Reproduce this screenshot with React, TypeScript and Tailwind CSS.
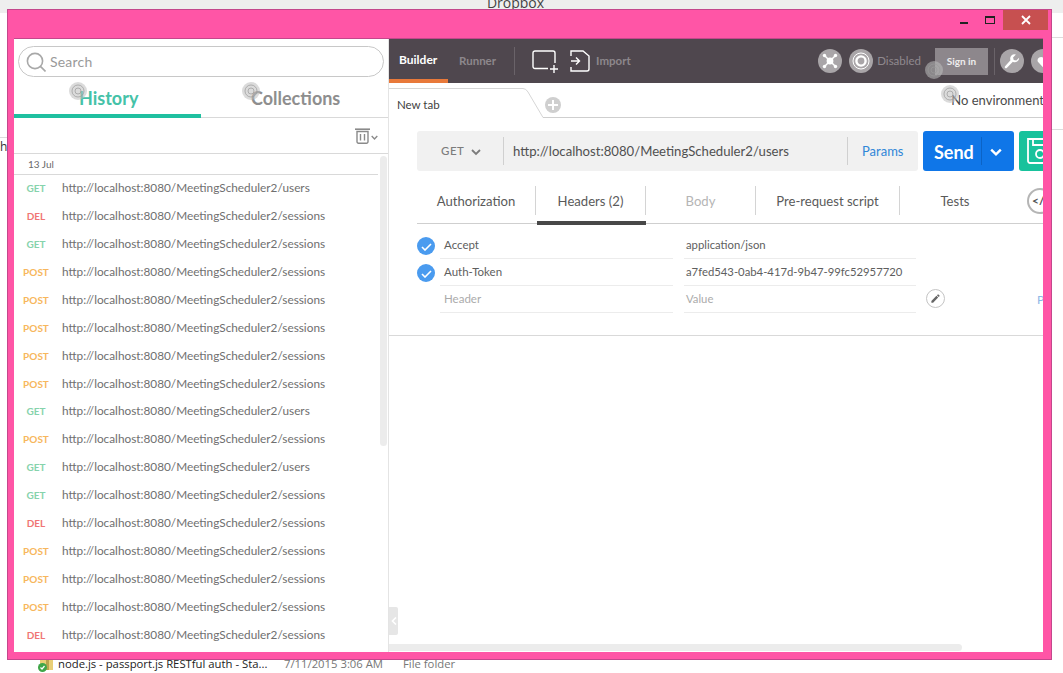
import React from 'react';

const USERS = 'http://localhost:8080/MeetingScheduler2/users';
const SESSIONS = 'http://localhost:8080/MeetingScheduler2/sessions';

const history: { method: 'GET' | 'POST' | 'DEL'; url: string }[] = [
  { method: 'GET', url: USERS },
  { method: 'DEL', url: SESSIONS },
  { method: 'GET', url: SESSIONS },
  { method: 'POST', url: SESSIONS },
  { method: 'POST', url: SESSIONS },
  { method: 'POST', url: SESSIONS },
  { method: 'POST', url: SESSIONS },
  { method: 'POST', url: SESSIONS },
  { method: 'GET', url: USERS },
  { method: 'POST', url: SESSIONS },
  { method: 'GET', url: USERS },
  { method: 'GET', url: SESSIONS },
  { method: 'DEL', url: SESSIONS },
  { method: 'POST', url: SESSIONS },
  { method: 'POST', url: SESSIONS },
  { method: 'POST', url: SESSIONS },
  { method: 'DEL', url: SESSIONS },
];

const methodColor = {
  GET: 'text-[#86d3ac]',
  POST: 'text-[#f7b75c]',
  DEL: 'text-[#f07575]',
};

// the little busy-cursor rings that were caught in the capture
const Ripple = ({ className }: { className: string }) => (
  <svg className={`absolute ${className}`} width="18" height="18" viewBox="0 0 18 18">
    <circle cx="9" cy="9" r="9" fill="#bdbdbd" fillOpacity="0.55" />
    <circle cx="9" cy="9" r="6" fill="none" stroke="#9a9a9a" strokeOpacity="0.7" strokeWidth="1" />
    <circle cx="9" cy="9" r="3" fill="none" stroke="#9a9a9a" strokeOpacity="0.7" strokeWidth="1" />
  </svg>
);

const Chevron = ({ className, size = 10, width = 2 }: { className?: string; size?: number; width?: number }) => (
  <svg className={className} width={size} height={size} viewBox="0 0 10 10" fill="none" stroke="currentColor" strokeWidth={width}>
    <path d="M1 3l4 4 4-4" />
  </svg>
);

const Sidebar = () => (
  <aside className="relative w-[374px] shrink-0 bg-white flex flex-col overflow-hidden">
    <div className="h-[38px] pt-[7px] pl-[4px] pr-[4px]">
      <div className="h-[31px] rounded-full border border-[#c8c8c8] flex items-center pl-[7px] gap-[4px]">
        <svg width="20" height="20" viewBox="0 0 20 20" fill="none" stroke="#a8a8a8" strokeWidth="1.6">
          <circle cx="9" cy="9" r="7.6" />
          <path d="M14.4 14.4L19.5 19.5" />
        </svg>
        <span className="text-[14px] text-[#9a9a9a] tracking-[0.2px]">Search</span>
      </div>
    </div>

    <div className="h-[41px] flex border-b border-[#d9d9d9]">
      <div className="w-[187px] h-[41px] border-b-4 border-[#1fc0a0] pl-[65px] pt-[9px] text-[18px] leading-[24px] font-bold text-[#45c2a8]">
        History
      </div>
      <div className="pl-[50px] pt-[9px] text-[18px] leading-[24px] font-bold text-[#8e8e8e]">Collections</div>
    </div>

    <div className="h-[36px] flex items-center justify-end pr-[10px] gap-[1px] border-b border-[#d9d9d9] text-[#8a8a8a]">
      <svg width="15" height="16" viewBox="0 0 15 16" fill="none" stroke="currentColor" strokeWidth="1.4">
        <path d="M0 1.2h15" strokeWidth="1.6" />
        <path d="M2 3.5v10.3a1.5 1.5 0 0 0 1.5 1.5h8a1.5 1.5 0 0 0 1.5-1.5V3.5z" />
        <path d="M5.5 6v6.5M9.5 6v6.5" />
      </svg>
      <Chevron size={7} className="mt-[3px]" />
    </div>

    <div className="h-[21px] w-[364px] flex items-center pl-[14px] border-b border-[#d9d9d9] text-[10px] text-[#6a6a6a]">13 Jul</div>

    <div className="-mt-px">
      {history.map((item, i) => (
        <div key={i} className={`h-[28px] flex items-center ${i === 8 ? '-mt-px' : ''}`}>
          <span className={`w-[44px] text-center text-[10px] font-bold ${methodColor[item.method]}`}>{item.method}</span>
          <span className="pl-[4px] text-[11.8px] text-[#6f6f6f] whitespace-nowrap">{item.url}</span>
        </div>
      ))}
    </div>

    {/* scroll thumb */}
    <div className="absolute left-[366px] top-[117px] w-[7px] h-[290px] rounded-full bg-[#ececec]" />
    <Ripple className="left-[55px] top-[43px]" />
    <Ripple className="left-[228px] top-[43px]" />
  </aside>
);

const TopBar = () => (
  <div className="relative h-[44px] shrink-0 bg-[#4f474e] flex items-center">
    <div className="w-[59px] h-[44px] border-b-4 border-[#e8793a] pl-[10px] pt-[11px] text-[12px] leading-[20px] font-bold text-white">Builder</div>
    <div className="pl-[11px] text-[11.5px] font-bold text-[#8d878c]">Runner</div>
    <div className="ml-[18px] w-px h-[28px] bg-[#6a6369]" />
    <svg className="ml-[17px]" width="27" height="23" viewBox="0 0 27 23" fill="none" stroke="#fff" strokeWidth="1.4">
      <path d="M16 18.5H3a2 2 0 0 1-2-2V3a2 2 0 0 1 2-2h18a2 2 0 0 1 2 2v10" />
      <path d="M22 15v8M18 19h8" />
    </svg>
    <svg className="ml-[11px]" width="20" height="22" viewBox="0 0 20 22" fill="none" stroke="#fff" strokeWidth="1.4">
      <path d="M1 6V1h12l6 5v13a2 2 0 0 1-2 2H1v-4" />
      <path d="M1 11h8M6 7.5L9.5 11 6 14.5" />
    </svg>
    <span className="ml-[6px] text-[11.5px] font-bold text-[#8d878c]">Import</span>

    <div className="ml-auto mr-[-12px] flex items-center shrink-0">
      <div className="w-[24px] h-[24px] rounded-full bg-[#a9a5a8] flex items-center justify-center">
        <svg width="18" height="18" viewBox="0 0 18 18" fill="none" stroke="#fff" strokeWidth="1.5">
          <path d="M4 4l10 10M14 4L4 14" />
          <circle cx="9" cy="9" r="3.4" fill="#fff" stroke="none" />
          <circle cx="3.5" cy="3.5" r="1.7" fill="#fff" stroke="none" />
          <circle cx="14.5" cy="3.5" r="1.7" fill="#fff" stroke="none" />
          <circle cx="3.5" cy="14.5" r="1.7" fill="#fff" stroke="none" />
          <circle cx="14.5" cy="14.5" r="1.7" fill="#fff" stroke="none" />
        </svg>
      </div>
      <div className="ml-[7px] w-[24px] h-[24px] rounded-full bg-[#a9a5a8] flex items-center justify-center">
        <svg width="20" height="20" viewBox="0 0 20 20" fill="none" stroke="#fff">
          <circle cx="10" cy="10" r="8" strokeWidth="1" />
          <circle cx="10" cy="10" r="4.6" strokeWidth="2.4" />
        </svg>
      </div>
      <span className="ml-[4px] text-[11.5px] text-[#8f898e]">Disabled</span>
      <div className="ml-[14px] w-[53px] h-[27px] bg-[#8d878c] flex items-center justify-center text-[10px] font-bold text-[#ededed]">Sign in</div>
      <div className="ml-[6px] w-px h-[27px] bg-[#6a6369]" />
      <div className="ml-[5px] w-[24px] h-[24px] rounded-full bg-[#a9a5a8] flex items-center justify-center">
        <svg width="16" height="16" viewBox="0 0 24 24" fill="#fff">
          <path d="M22.7 7.1l-4.3 4.3-3.8-1-1-3.8 4.3-4.3a6.5 6.5 0 0 0-8.2 8.4L1.6 19.8a2 2 0 0 0 0 2.6 2 2 0 0 0 2.6 0l9.100-9.100a6.500 6.500 0 0 0 9.400-6.200z" />
        </svg>
      </div>
      <div className="ml-[7px] w-[24px] h-[24px] rounded-full bg-[#a9a5a8] flex items-center justify-center">
        <svg width="15" height="15" viewBox="0 0 24 24" fill="#fff">
          <path d="M12 22L3 12.500a5.500 5.500 0 0 1 9-6 5.500 5.500 0 0 1 9 6z" />
        </svg>
      </div>
    </div>
  </div>
);

const TabBar = () => (
  <div className="relative h-[35px] shrink-0 flex">
    {/* tab outline with the slanted right edge */}
    <svg className="absolute left-0 top-0" width="156" height="35" viewBox="0 0 156 35" fill="none">
      <path d="M0 5.500H134q3 0 5 3.500l15 25.500H654" stroke="#d6d6d6" />
    </svg>
    <div className="absolute left-[154px] right-0 bottom-0 h-px bg-[#cfcfcf]" />
    <span className="pl-[8px] pt-[14px] text-[11.5px] leading-[16px] text-[#3f3f3f]">New tab</span>
    <div className="absolute left-[156px] top-[14px] w-[16px] h-[16px] rounded-full bg-[#cfcfcf] flex items-center justify-center">
      <svg width="10" height="10" viewBox="0 0 10 10" stroke="#fff" strokeWidth="2">
        <path d="M5 0v10M0 5h10" />
      </svg>
    </div>
    <span className="ml-auto mr-[-1px] pt-[8px] text-[13px] leading-[18px] text-[#4a4a4a] whitespace-nowrap">No environment</span>
  </div>
);

const UrlBar = () => (
  <div className="mt-[13px] ml-[28px] h-[40px] shrink-0 flex w-[640px]">
    <div className="w-[501px] shrink-0 rounded-[3px] bg-[#f1f1f1] flex items-center">
      <div className="w-[87px] h-[28px] border-r border-[#d0d0d0] flex items-center pl-[24px] gap-[7px] text-[#7c7c7c]">
        <span className="text-[11.5px] font-medium tracking-[0.5px]">GET</span>
        <Chevron size={10} width={1.8} className="mt-[1px]" />
      </div>
      <span className="pl-[9px] pt-[1px] text-[13.15px] text-[#505050] w-[343px]">{USERS}</span>
      <div className="h-[28px] border-l border-[#d0d0d0] pl-[14px] pt-[1px] flex items-center text-[13px] text-[#2f86d8]">Params</div>
    </div>
    <div className="ml-[5px] w-[91px] shrink-0 rounded-[3px] bg-[#0f76e8] flex items-center text-white">
      <span className="w-[59px] h-[28px] pl-[11px] border-r border-[#0b63c6] text-[18px] leading-[30px] font-bold">Send</span>
      <Chevron size={12} className="ml-[8px] mt-[2px]" />
    </div>
    <div className="ml-[5px] w-[40px] shrink-0 rounded-[3px] bg-[#18c29c] flex items-center pl-[8px]">
      <svg className="shrink-0" width="27" height="26" viewBox="0 0 27 26" fill="none" stroke="#fff" strokeWidth="1.8">
        <path d="M1 1h20l5 5v19H3a2 2 0 0 1-2-2z" />
        <path d="M6 1v6h12V1" />
        <circle cx="13" cy="16" r="4" />
      </svg>
    </div>
  </div>
);

const subTabs = [
  { label: 'Authorization', w: 'w-[119px]', text: 'text-[#5a5a5a]' },
  { label: 'Headers (2)', w: 'w-[110px]', text: 'text-[#5a5a5a]', active: true },
  { label: 'Body', w: 'w-[110px]', text: 'text-[#b5b5b5]' },
  { label: 'Pre-request script', w: 'w-[144px]', text: 'text-[#5a5a5a]' },
  { label: 'Tests', w: 'w-[110px]', text: 'text-[#5a5a5a]', last: true },
];

const SubTabs = () => (
  <div className="relative mt-[12px] ml-[28px] h-[41px] shrink-0 flex border-b border-[#cfcfcf]">
    {subTabs.map((t) => (
      <div key={t.label} className={`relative ${t.w} shrink-0 pt-[3px] h-[41px]`}>
        <div className={`h-[29px] pt-[2px] flex items-center justify-center text-[13.1px] ${t.text} ${t.last ? '' : 'border-r border-[#d4d4d4]'}`}>{t.label}</div>
        {t.active && <div className="absolute left-[1px] right-0 bottom-[-1px] h-[4px] bg-[#484848]" />}
      </div>
    ))}
    <div className="absolute left-[610px] top-[5px] w-[26px] h-[26px] rounded-full border-2 border-[#b5b5b5] bg-white flex items-center pl-[3px] text-[12px] font-bold text-[#555] whitespace-nowrap">
      &lt;/
    </div>
  </div>
);

const Check = () => (
  <div className="w-[18px] h-[18px] rounded-full bg-[#4a9bef] flex items-center justify-center">
    <svg width="11" height="9" viewBox="0 0 11 9" fill="none" stroke="#fff" strokeWidth="1.6">
      <path d="M1 5l3 3 6-6" />
    </svg>
  </div>
);

const HeaderRow = ({ name, value, on = true }: { name: string; value: string; on?: boolean }) => (
  <div className="h-[27px] flex items-center">
    <div className="w-[29px] pl-[9px] shrink-0 mt-[1px]">{on && <Check />}</div>
    <div className={`ml-[3px] w-[233px] h-[27px] flex items-center pl-[4px] border-b border-[#ececec] text-[11.5px] ${on ? 'text-[#5e5e5e]' : 'text-[#ababab]'}`}>{name}</div>
    <div className={`ml-[11px] w-[232px] h-[27px] flex items-center pl-[2px] border-b border-[#ececec] text-[11.3px] ${on ? 'text-[#5e5e5e]' : 'text-[#ababab]'}`}>{value}</div>
  </div>
);

const HeaderRows = () => (
  <div className="relative mt-[8px] pb-[22px] shrink-0 border-b border-[#d9d9d9]">
    <div className="pl-[19px]">
      <HeaderRow name="Accept" value="application/json" />
      <HeaderRow name="Auth-Token" value="a7fed543-0ab4-417d-9b47-99fc52957720" />
      <HeaderRow name="Header" value="Value" on={false} />
    </div>
    <div className="absolute left-[537px] top-[57px] w-[19px] h-[19px] rounded-full border border-[#c4c4c4] flex items-center justify-center">
      <svg width="11" height="11" viewBox="0 0 24 24" fill="#666">
        <path d="M3 17.250V21h3.750L17.800 9.940l-3.750-3.750L3 17.250zM20.700 7.040a1 1 0 0 0 0-1.410l-2.340-2.340a1 1 0 0 0-1.410 0l-1.830 1.830 3.750 3.750 1.830-1.830z" />
      </svg>
    </div>
    <span className="absolute left-[648px] top-[60px] text-[12px] leading-[16px] text-[#8db8e6]">P</span>
  </div>
);

const Main = () => (
  <main className="flex-1 min-w-0 flex flex-col bg-white overflow-hidden border-l border-[#e4e4e4]">
    <div className="relative flex flex-col h-full">
      <TopBar />
      <TabBar />
      <UrlBar />
      <SubTabs />
      <HeaderRows />
      <div className="relative flex-1">
        <div className="absolute left-0 top-[271px] w-[9px] h-[28px] rounded-r-[2px] bg-[#e6e6e6] flex items-center justify-center">
          <svg width="6" height="8" viewBox="0 0 6 8" fill="none" stroke="#fff" strokeWidth="1.6">
            <path d="M5 0.500L1.500 4 5 7.500" />
          </svg>
        </div>
        <div className="absolute left-0 top-[308px] w-[573px] h-[7px] rounded-r-full bg-[#ececec]" />
      </div>
      <Ripple className="left-[536px] top-[22px]" />
      <Ripple className="left-[552px] top-[46px]" />
    </div>
  </main>
);

const Backdrop = () => (
  <div className="h-full flex flex-col text-[11.3px] font-['Open_Sans',sans-serif]">
    <div className="h-[13px] shrink-0 bg-[#eeeeee] overflow-hidden flex justify-center">
      <span className="-mt-[6px] ml-[-32px] text-[14px] leading-[18px] text-[#444]">Dropbox</span>
    </div>
    <div className="flex-1 flex flex-col justify-end bg-white">
      <div className="h-[18px] flex items-center pl-[38px] overflow-hidden">
        <svg width="15" height="15" viewBox="0 0 15 15">
          <rect x="2" y="1" width="13" height="12" fill="#e9cf76" />
          <rect x="8" y="1" width="3" height="12" fill="#b9a24c" />
          <circle cx="4.500" cy="10.500" r="4.500" fill="#3fa648" />
          <path d="M2.500 10.500l1.500 1.500 2.500-3" fill="none" stroke="#fff" strokeWidth="1.200" />
        </svg>
        <span className="ml-[5px] w-[226px] text-[#222] whitespace-nowrap">node.js - passport.js RESTful auth - Sta...</span>
        <span className="w-[119px] text-[#777] whitespace-nowrap">7/11/2015 3:06 AM</span>
        <span className="text-[#777]">File folder</span>
      </div>
    </div>
  </div>
);

const App: React.FC = () => {
  return (
    <div className="relative w-[1063px] h-[673px] overflow-hidden bg-white font-['Lato',sans-serif]">
      <Backdrop />
      <span className="absolute left-0 top-[139px] text-[12px] leading-[16px] text-[#333] font-['Open_Sans',sans-serif]">h</span>
      {/* bits of the explorer window showing past the right edge */}
      <div className="absolute left-[1052px] top-[37px] w-[11px] h-px bg-[#dcdcdc]" />
      <div className="absolute left-[1052px] top-[129px] w-[11px] h-px bg-[#dcdcdc]" />
      <div className="absolute left-0 top-[137px] w-[7px] h-px bg-[#dcdcdc]" />

      {/* the Postman window */}
      <div className="absolute left-[7px] top-[9px] w-[1045px] h-[651px] bg-[#ff55a6] border border-[#c4478c] flex flex-col pl-[6px] pr-[8px] pb-[7px]">
        <div className="h-[28px] shrink-0 relative">
          <div className="absolute right-[-5px] top-0 w-[45px] h-[20px] bg-[#c75050] flex items-center justify-center">
            <svg width="10" height="10" viewBox="0 0 10 10" stroke="#fff" strokeWidth="1.800">
              <path d="M1 1l8 8M9 1L1 9" />
            </svg>
          </div>
          <div className="absolute right-[48px] top-[6px] w-[10px] h-[8px] border border-[#222] border-t-2" />
          <div className="absolute right-[75px] top-[12px] w-[8px] h-[2px] bg-[#222]" />
        </div>
        <div className="flex-1 min-h-0 flex border-t border-[#c4478c]">
          <Sidebar />
          <Main />
        </div>
      </div>
    </div>
  );
};

export default App;
